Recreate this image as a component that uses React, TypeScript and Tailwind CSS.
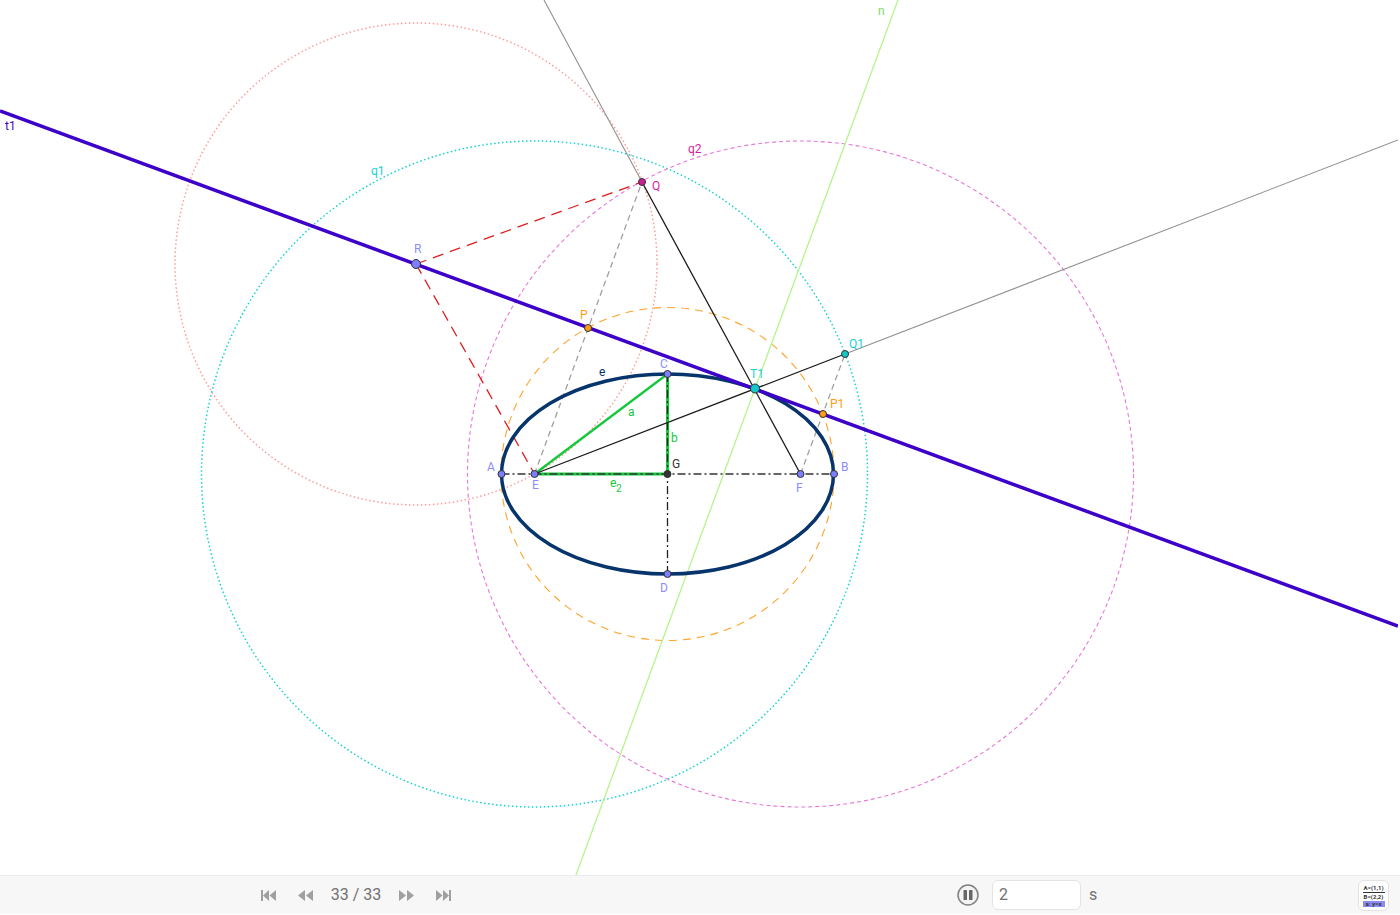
const E = [534.5, 474];
const F = [800.5, 474];
const G = [667.5, 474];
const R = [416, 264];
const Q = [642, 182];
const Q1 = [845, 354];
const T1 = [755, 388.5];
const C = [667.5, 374];
const D = [667.5, 574];
const A = [501.5, 474];
const B = [834, 474];
const P = [588, 328];
const P1 = [823, 414];

function Seg({ a, b, c, w = 1.3, dash }: { a: number[]; b: number[]; c: string; w?: number; dash?: string }) {
  return <line x1={a[0]} y1={a[1]} x2={b[0]} y2={b[1]} stroke={c} strokeWidth={w} strokeDasharray={dash} />;
}

function Pt({ p, fill, r = 3.5 }: { p: number[]; fill: string; r?: number }) {
  return <circle cx={p[0]} cy={p[1]} r={r} fill={fill} stroke="#333333" strokeWidth={1} />;
}

function Label({ x, y, c, children }: { x: number; y: number; c: string; children: React.ReactNode }) {
  return (
    <text x={x} y={y} fill={c} fontSize={12} fontFamily="Roboto, sans-serif">
      {children}
    </text>
  );
}

function Construction() {
  return (
    <svg width="1398" height="875" viewBox="0 0 1398 875" className="block">
      {/* circles */}
      <circle cx={R[0]} cy={R[1]} r={241} fill="none" stroke="#ff9c9c" strokeWidth={1.5} strokeDasharray="1.5 2.5" />
      <circle cx={E[0]} cy={E[1]} r={333} fill="none" stroke="#14d2d2" strokeWidth={1.5} strokeDasharray="1.5 2.5" />
      <circle cx={F[0]} cy={F[1]} r={333} fill="none" stroke="#e878d8" strokeWidth={1.1} strokeDasharray="4 3" />
      <circle cx={G[0]} cy={G[1]} r={166.5} fill="none" stroke="#ffa42c" strokeWidth={1.1} strokeDasharray="8 6" />

      {/* lines */}
      <Seg a={[898, 0]} b={[576, 875]} c="#b4f58c" />
      <Seg a={[544, 0]} b={Q} c="#909090" w={1.1} />
      <Seg a={Q1} b={[1398, 140]} c="#909090" w={1.1} />
      <Seg a={E} b={Q} c="#a0a0a0" dash="6 4" />
      <Seg a={F} b={Q1} c="#a0a0a0" dash="6 4" />
      <Seg a={R} b={Q} c="#dc1e1e" dash="11 7" />
      <Seg a={R} b={E} c="#dc1e1e" dash="11 7" />

      {/* ellipse */}
      <ellipse cx={G[0]} cy={G[1]} rx={166} ry={100} fill="none" stroke="#06346b" strokeWidth={3.5} />

      {/* triangle */}
      <Seg a={E} b={C} c="#14c83c" w={2.3} />
      <Seg a={C} b={G} c="#14c83c" w={3} />
      <Seg a={E} b={G} c="#14c83c" w={3} />
      <Seg a={A} b={B} c="#333333" dash="8 3 2 3" />
      <Seg a={C} b={D} c="#222222" dash="8 3 2 3" />
      <Seg a={Q} b={F} c="#1a1a1a" />
      <Seg a={E} b={Q1} c="#1a1a1a" />

      {/* tangent */}
      <Seg a={[0, 111]} b={[1398, 626]} c="#3c00c8" w={3.5} />

      {/* points */}
      <Pt p={R} fill="#7d7dff" r={4.5} />
      <Pt p={Q} fill="#c81e96" />
      <Pt p={P} fill="#ff9c14" />
      <Pt p={P1} fill="#ff9c14" />
      <Pt p={Q1} fill="#14c8c8" />
      <Pt p={T1} fill="#14c8c8" r={4.5} />
      <Pt p={C} fill="#7d7dff" />
      <Pt p={D} fill="#7d7dff" />
      <Pt p={A} fill="#7d7dff" />
      <Pt p={B} fill="#7d7dff" />
      <Pt p={E} fill="#7d7dff" />
      <Pt p={F} fill="#7d7dff" />
      <Pt p={G} fill="#333333" />

      {/* labels */}
      <Label x={5} y={130} c="#3c00c8">t1</Label>
      <Label x={878} y={15} c="#7ed86a">n</Label>
      <Label x={371} y={175} c="#14d2d2">q1</Label>
      <Label x={688} y={153} c="#d21ea0">q2</Label>
      <Label x={652} y={190} c="#d21ea0">Q</Label>
      <Label x={414} y={253} c="#8c8cff">R</Label>
      <Label x={580} y={319} c="#ff9c14">P</Label>
      <Label x={849} y={348} c="#14d2d2">Q1</Label>
      <Label x={750} y={378} c="#14d2d2">T1</Label>
      <Label x={830} y={408} c="#ff9c14">P1</Label>
      <Label x={660} y={368} c="#8c8cff">C</Label>
      <Label x={599} y={376} c="#06346b">e</Label>
      <Label x={628} y={416} c="#14c83c">a</Label>
      <Label x={671} y={442} c="#14c83c">b</Label>
      <Label x={672} y={468} c="#333333">G</Label>
      <Label x={487} y={471} c="#8c8cff">A</Label>
      <Label x={841} y={471} c="#8c8cff">B</Label>
      <Label x={532} y={489} c="#8c8cff">E</Label>
      <Label x={796} y={492} c="#8c8cff">F</Label>
      <Label x={660} y={592} c="#8c8cff">D</Label>
      <Label x={610} y={487} c="#14c83c">e</Label>
      <text x={616} y={492} fill="#14c83c" fontSize={10} fontFamily="Roboto, sans-serif">2</text>
    </svg>
  );
}

function NavIcon({ kind }: { kind: "first" | "prev" | "next" | "last" }) {
  const shapes = {
    first: "M1 1h2v11H1zM9 1v11L3 6.500zM16 1v11L9.500 6.500z",
    prev: "M8 1v11L1 6.500zM16 1v11L9 6.500z",
    next: "M1 1v11l7-5.500zM9 1v11l7-5.500z",
    last: "M1 1v11l6.500-5.500zM8 1v11l6-5.500zM14 1h2v11h-2z",
  };
  return (
    <svg width="17" height="13" viewBox="0 0 17 13" className="block">
      <path d={shapes[kind]} fill="#a0a0a0" />
    </svg>
  );
}

function FormulaIcon() {
  return (
    <div className="w-[31px] h-[31px] rounded-md border border-[#e3e3e3] bg-white flex flex-col items-center justify-center">
      <div className="w-[22px] text-center text-[6px] leading-[8px] font-bold text-[#333333] border-b border-[#333333]">A=(1,1)</div>
      <div className="w-[22px] text-center text-[6px] leading-[8px] font-bold text-[#333333]">B=(2,2)</div>
      <div className="w-[22px] text-center text-[6px] leading-[6px] font-bold text-[#333333] bg-[#8c8cf0]">a: y=x</div>
    </div>
  );
}

export default function App() {
  return (
    <div className="w-[1400px] h-[915px] bg-white overflow-hidden flex flex-col font-['Roboto',sans-serif]">
      <div className="h-[875px] shrink-0">
        <Construction />
      </div>
      <div className="h-[39px] shrink-0 bg-[#f7f7f7] border-t border-[#ebebeb] flex items-center text-[#707070]">
        <div className="w-[260px] shrink-0" />
        <NavIcon kind="first" />
        <div className="w-[20px] shrink-0" />
        <NavIcon kind="prev" />
        <span className="w-[84px] text-center text-base">33 / 33</span>
        <NavIcon kind="next" />
        <div className="w-[20px] shrink-0" />
        <NavIcon kind="last" />
        <div className="w-[504px] shrink-0" />
        <svg width="24" height="24" viewBox="0 0 24 24" className="block">
          <circle cx="12" cy="12" r="10" fill="#f3f3f3" stroke="#808080" strokeWidth="1.500" />
          <rect x="7.500" y="7" width="3.500" height="10" rx="0.500" fill="#666666" />
          <rect x="13" y="7" width="3.500" height="10" rx="0.500" fill="#666666" />
        </svg>
        <div className="w-[12px] shrink-0" />
        <div className="w-[89px] h-[30px] shrink-0 rounded-md border border-[#e3e3e3] bg-white px-1.5 flex items-center text-base">2</div>
        <span className="ml-[8px] text-base">s</span>
        <div className="ml-auto mr-[11px]">
          <FormulaIcon />
        </div>
      </div>
      <div className="h-px bg-white" />
    </div>
  );
}
